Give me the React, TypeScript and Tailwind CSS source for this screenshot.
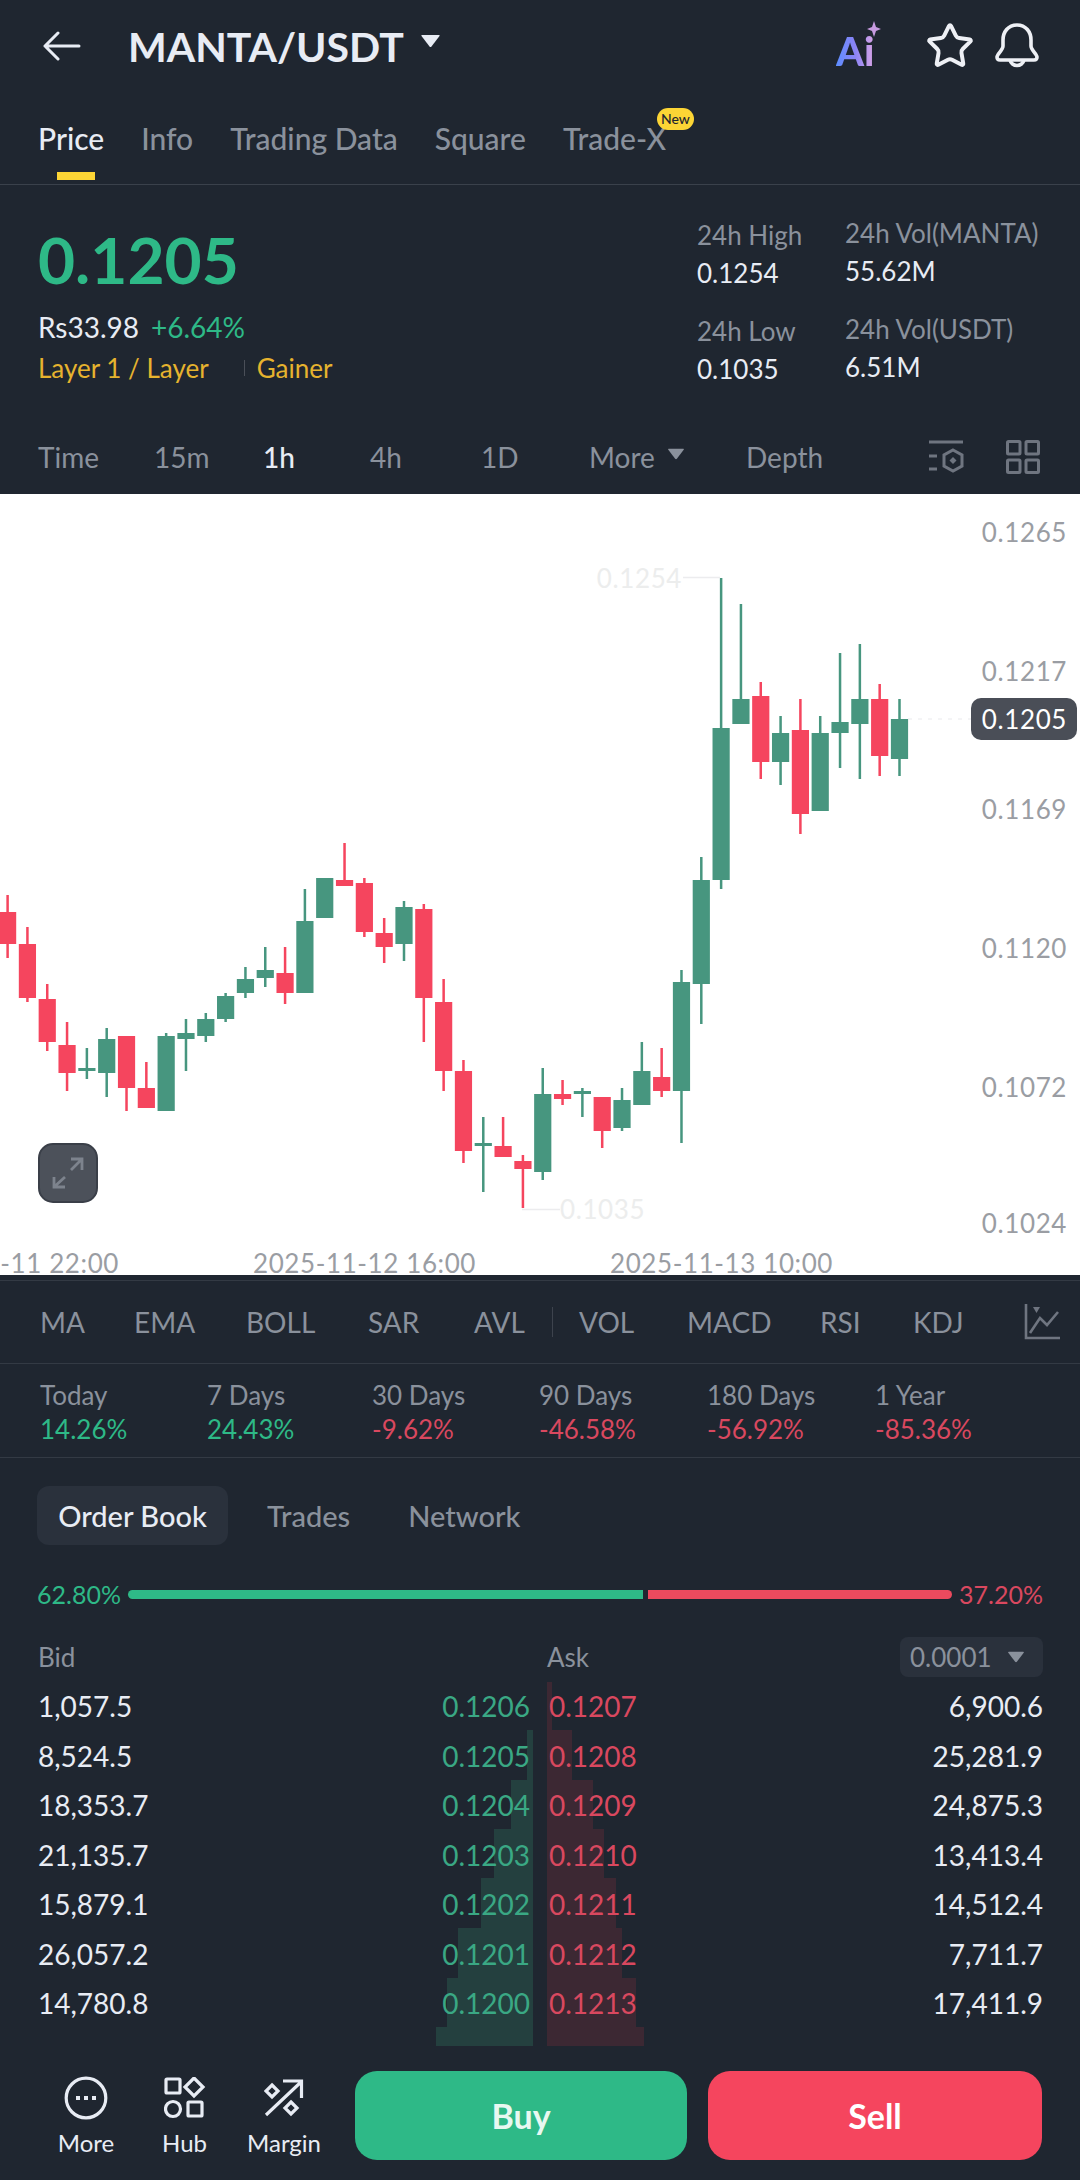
import React from "react";
import { Star } from "lucide-react";

type C = [number, number, number, number, number]; // up(1)/down(0), wickTop, wickBottom, bodyTop, bodyBottom
const candles: C[] = [
  [0, 895, 958, 912, 944],
  [0, 927, 1002, 944, 998],
  [0, 984, 1051, 999, 1042],
  [0, 1022, 1091, 1045, 1073],
  [1, 1048, 1079, 1068, 1071],
  [1, 1028, 1097, 1039, 1073],
  [0, 1036, 1111, 1036, 1088],
  [0, 1062, 1108, 1088, 1108],
  [1, 1033, 1111, 1036, 1111],
  [1, 1019, 1071, 1033, 1039],
  [1, 1013, 1042, 1019, 1036],
  [1, 993, 1022, 996, 1019],
  [1, 967, 998, 979, 993],
  [1, 947, 987, 970, 978],
  [0, 947, 1004, 973, 993],
  [1, 889, 993, 921, 993],
  [1, 878, 918, 878, 918],
  [0, 843, 886, 880, 886],
  [0, 878, 937, 883, 932],
  [0, 918, 963, 933, 947],
  [1, 901, 961, 907, 944],
  [0, 904, 1042, 909, 998],
  [0, 979, 1091, 1002, 1071],
  [0, 1060, 1163, 1071, 1151],
  [1, 1117, 1192, 1143, 1146],
  [0, 1117, 1157, 1146, 1157],
  [0, 1155, 1208, 1161, 1169],
  [1, 1068, 1180, 1094, 1172],
  [0, 1080, 1105, 1094, 1099],
  [1, 1088, 1117, 1091, 1094],
  [0, 1097, 1148, 1097, 1131],
  [1, 1088, 1131, 1100, 1128],
  [1, 1042, 1105, 1071, 1105],
  [0, 1048, 1097, 1077, 1091],
  [1, 970, 1143, 982, 1091],
  [1, 857, 1024, 880, 984],
  [1, 578, 889, 728, 880].map((v, i) => (i === 1 ? 578 : v)) as C,
  [1, 604, 724, 699, 724],
  [0, 682, 779, 696, 762],
  [1, 716, 785, 733, 762],
  [0, 699, 834, 730, 814],
  [1, 716, 811, 733, 811],
  [1, 653, 768, 722, 733],
  [1, 644, 779, 699, 724],
  [0, 684, 776, 699, 756],
  [1, 699, 776, 719, 759],
];

const CHART_TOP = 494;
const axis: [string, number][] = [
  ["0.1265", 532],
  ["0.1217", 671],
  ["0.1169", 809],
  ["0.1120", 948],
  ["0.1072", 1087],
  ["0.1024", 1223],
];

function Chart() {
  return (
    <div className="relative h-[781px] w-full overflow-hidden bg-white">
      <svg width="1080" height="781" viewBox={`0 ${CHART_TOP} 1080 781`} className="block">
        {candles.map((c, i) => {
          const x = 7.6 + 19.82 * i;
          const fill = c[0] ? "#47967f" : "#f5455e";
          return (
            <g key={i} fill={fill}>
              <rect x={x - 1.25} y={c[1]} width={2.5} height={c[2] - c[1]} />
              <rect x={x - 8.6} y={c[3]} width={17.2} height={Math.max(c[4] - c[3], 3)} />
            </g>
          );
        })}
        <line x1="683" y1="577.5" x2="720" y2="577.5" stroke="#ececee" strokeWidth="1.5" />
        <line x1="522" y1="1209.5" x2="560" y2="1209.5" stroke="#ececee" strokeWidth="1.5" />
        <line x1="908" y1="719" x2="971" y2="719" stroke="#e9e9ec" strokeWidth="1" strokeDasharray="4 6" />
        <g fontFamily="Lato, sans-serif" fontSize="26" letterSpacing="0.6">
          {axis.map(([t, y]) => (
            <text key={t} x="1067" y={y} textAnchor="end" dominantBaseline="central" fill="#9a9da3">
              {t}
            </text>
          ))}
          <text x="682" y="578" textAnchor="end" dominantBaseline="central" fill="#eceded">0.1254</text>
          <text x="560" y="1209" dominantBaseline="central" fill="#eceded">0.1035</text>
          <text x="119" y="1263" textAnchor="end" dominantBaseline="central" fill="#9a9da3">-11 22:00</text>
          <text x="253" y="1263" dominantBaseline="central" fill="#9a9da3">2025-11-12 16:00</text>
          <text x="610" y="1263" dominantBaseline="central" fill="#9a9da3">2025-11-13 10:00</text>
        </g>
      </svg>
      <div className="absolute left-[971px] top-[204px] flex h-[42px] w-[106px] items-center justify-end rounded-[10px] bg-[#4a4e57] pr-[10px] text-[26px] leading-none tracking-[0.6px] text-white">
        0.1205
      </div>
      <div className="absolute left-[38px] top-[649px] flex h-[60px] w-[60px] items-center justify-center rounded-[15px] border-2 border-[#3a3f48] bg-[#4c515a]">
        <svg width="40" height="40" viewBox="0 0 40 40" fill="none" stroke="#7d838d" strokeWidth="2.8">
          <path d="M6 34 L17 24 M6 24 V34 H17" />
          <path d="M23 17 L34 6 M23 6 H34 V17" />
        </svg>
      </div>
    </div>
  );
}

const DarkCaret = ({ className }: { className: string }) => (
  <svg viewBox="0 0 20 14" className={className} fill="currentColor">
    <path d="M1.5 1 H18.5 Q19.6 1 19 2 L11 12.6 Q10 13.6 9 12.6 L1 2 Q0.4 1 1.5 1 Z" />
  </svg>
);

function Header() {
  return (
    <div className="flex h-[92px] items-center pl-[43px] pr-[41px]">
      <svg width="38" height="30" viewBox="0 0 38 30" fill="none" stroke="#e8ecf4" strokeWidth="3" strokeLinecap="round" strokeLinejoin="round">
        <path d="M36 15 H2 M15 2 L2 15 L15 28" />
      </svg>
      <span className="ml-[47px] text-[41px] font-bold leading-none text-[#e8ecf4]">MANTA/USDT</span>
      <DarkCaret className="ml-[16px] mt-[-10px] h-[14px] w-[21px] text-[#e8ecf4]" />
      <div className="relative ml-auto mr-[43px] mt-[10px] h-[38px] w-[46px]">
        <span className="bg-gradient-to-r from-[#5a8dff] via-[#8a83f5] to-[#d9a3e6] bg-clip-text text-[40px] font-black leading-[38px] text-transparent">
          Ai
        </span>
        <svg className="absolute left-[31px] top-[-11px]" width="14" height="16" viewBox="0 0 14 16" fill="#c79be0">
          <path d="M7 0 L9 6 L14 8 L9 10 L7 16 L5 10 L0 8 L5 6 Z" />
        </svg>
      </div>
      <Star size={50} strokeWidth={1.9} color="#eef0f5" />
      <svg className="ml-[20px]" width="44" height="46" viewBox="0 0 44 46" fill="none" stroke="#eef0f5" strokeWidth="3.6" strokeLinejoin="round">
        <path d="M22 2 C13 2 8 9 8 17 V23 C8 27 2 31 2 34 Q2 37 5 37 H39 Q42 37 42 34 C42 31 36 27 36 23 V17 C36 9 31 2 22 2 Z" />
        <path d="M15 37 A7.2 7.2 0 0 0 29 37" />
      </svg>
    </div>
  );
}

function Tabs() {
  return (
    <div className="relative flex h-[93px] items-center gap-[37px] border-b border-[#3a414b] pb-[1px] pl-[38px] text-[30px] font-medium leading-none text-[#8a919c]">
      <span className="relative text-[#e8ecf4]">
        Price
        <span className="absolute left-[19px] top-[49px] h-[8px] w-[38px] bg-[#fcd535]" />
      </span>
      <span>Info</span>
      <span>Trading Data</span>
      <span>Square</span>
      <span className="relative">
        Trade-X
        <span className="absolute left-[94px] top-[-15px] flex h-[22px] w-[37px] items-center justify-center rounded-full bg-[#fcd535] text-[14px] font-medium text-[#1f2630]">
          New
        </span>
      </span>
    </div>
  );
}

function Stats() {
  return (
    <div className="flex h-[235px] pl-[38px]">
      <div className="flex w-[659px] flex-col pt-[43px]">
        <span className="text-[64px] font-bold leading-[64px] text-[#2eb987]">0.1205</span>
        <div className="mt-[19px] flex gap-[12px] text-[28px] leading-[32px]">
          <span className="text-[#e8ecf4]">Rs33.98</span>
          <span className="text-[#2eb987]">+6.64%</span>
        </div>
        <div className="mt-[9px] flex items-center text-[26px] leading-[32px] text-[#e6b32e]">
          <span>Layer 1 / Layer</span>
          <span className="ml-[35px] mr-[12px] h-[16px] w-px bg-[#4a4f58]" />
          <span>Gainer</span>
        </div>
      </div>
      <div className="flex w-[148px] flex-col pt-[35px] text-[26px] leading-[30px]">
        <span className="text-[#8a919c]">24h High</span>
        <span className="mt-[8px] text-[#e8ecf4]">0.1254</span>
        <span className="mt-[28px] text-[#8a919c]">24h Low</span>
        <span className="mt-[8px] text-[#e8ecf4]">0.1035</span>
      </div>
      <div className="flex flex-col pt-[33px] text-[26px] leading-[30px]">
        <span className="text-[#8a919c]">24h Vol(MANTA)</span>
        <span className="mt-[8px] text-[#e8ecf4]">55.62M</span>
        <span className="mt-[28px] text-[#8a919c]">24h Vol(USDT)</span>
        <span className="mt-[8px] text-[#e8ecf4]">6.51M</span>
      </div>
    </div>
  );
}

function Intervals() {
  return (
    <div className="flex h-[74px] items-center pb-[1px] pl-[38px] pr-[40px] text-[28px] leading-none text-[#8a919c]">
      <span className="w-[116px]">Time</span>
      <span className="w-[109px]">15m</span>
      <span className="w-[107px] font-medium text-[#e8ecf4]">1h</span>
      <span className="w-[111px]">4h</span>
      <span className="w-[108px]">1D</span>
      <span className="flex w-[157px] items-center">
        More
        <DarkCaret className="ml-[12px] mt-[-6px] h-[12px] w-[18px]" />
      </span>
      <span>Depth</span>
      <svg className="ml-auto" width="36" height="36" viewBox="0 0 36 36" fill="none" stroke="#6f7580" strokeWidth="3">
        <path d="M1 3 H35 M1 17 H9 M1 30 H9" />
        <path d="M25 11 L34 16 V27 L25 32 L16 27 V16 Z" />
        <path d="M25 18 L28.5 21.5 L25 25 L21.5 21.5 Z" fill="#6f7580" stroke="none" />
      </svg>
      <svg className="ml-[42px]" width="34" height="34" viewBox="0 0 34 34" fill="none" stroke="#6f7580" strokeWidth="3">
        <rect x="1.5" y="1.5" width="12.5" height="12.5" rx="1" />
        <rect x="20" y="1.5" width="12.5" height="12.5" rx="1" />
        <rect x="1.5" y="20" width="12.5" height="12.5" rx="1" />
        <rect x="20" y="20" width="12.5" height="12.5" rx="1" />
      </svg>
    </div>
  );
}

function Indicators() {
  return (
    <div className="flex h-[84px] items-center border-y border-y-[#333a44] pl-[40px] pr-[20px] text-[28px] leading-none text-[#8a919c]">
      <span className="w-[94px]">MA</span>
      <span className="w-[112px]">EMA</span>
      <span className="w-[122px]">BOLL</span>
      <span className="w-[106px]">SAR</span>
      <span className="w-[78px]">AVL</span>
      <span className="mr-[26px] h-[30px] w-px bg-[#3d434d]" />
      <span className="w-[108px]">VOL</span>
      <span className="w-[133px]">MACD</span>
      <span className="w-[93px]">RSI</span>
      <span>KDJ</span>
      <svg className="ml-auto" width="36" height="36" viewBox="0 0 36 36" fill="none" stroke="#6f7580" strokeWidth="2.6">
        <path d="M2 0 V34 H36" />
        <path d="M6 29 L16 14 L23 21 L34 8" />
        <path d="M9 3 H16 L12.5 9 Z" fill="#6f7580" stroke="none" />
      </svg>
    </div>
  );
}

const changes: [string, string, boolean, string][] = [
  ["Today", "14.26%", true, "w-[167px]"],
  ["7 Days", "24.43%", true, "w-[165px]"],
  ["30 Days", "-9.62%", false, "w-[167px]"],
  ["90 Days", "-46.58%", false, "w-[168px]"],
  ["180 Days", "-56.92%", false, "w-[168px]"],
  ["1 Year", "-85.36%", false, ""],
];

function Changes() {
  return (
    <div className="flex h-[94px] border-b border-[#333a44] pl-[40px] pt-[16px] text-[26px] leading-[30px]">
      {changes.map(([label, val, up, w]) => (
        <div key={label} className={`flex flex-col gap-[4px] ${w}`}>
          <span className="text-[#8a919c]">{label}</span>
          <span className={up ? "text-[#2eb987]" : "text-[#d9485f]"}>{val}</span>
        </div>
      ))}
    </div>
  );
}

function BookTabs() {
  return (
    <div className="ml-[37px] mt-[28px] flex h-[59px] items-center text-[29px] font-medium leading-none text-[#8a919c]">
      <span className="flex h-full w-[191px] items-center justify-center rounded-[12px] bg-[#2a313c] text-[#e8ecf4]">Order Book</span>
      <span className="ml-[39px]">Trades</span>
      <span className="ml-[58px]">Network</span>
    </div>
  );
}

function Ratio() {
  return (
    <div className="ml-[37px] mr-[37px] mt-[34px] flex h-[30px] items-center text-[25px] leading-none">
      <span className="w-[91px] text-[#2eb987]">62.80%</span>
      <span className="h-[9px] w-[515px] rounded-l-full bg-[#2eb987]" />
      <span className="ml-[5px] h-[9px] w-[304px] rounded-r-full bg-[#ec4a5e]" />
      <span className="ml-auto text-[#d9485f]">37.20%</span>
    </div>
  );
}

function BookHeader() {
  return (
    <div className="ml-[38px] mr-[37px] mt-[28px] flex h-[40px] items-center text-[26px] leading-none text-[#8a919c]">
      <span className="w-[509px]">Bid</span>
      <span>Ask</span>
      <span className="ml-auto flex h-full w-[143px] items-center rounded-[8px] bg-[#2a313c] pl-[10px]">
        0.0001
        <DarkCaret className="ml-[15px] h-[12px] w-[18px]" />
      </span>
    </div>
  );
}

const rows = [
  ["1,057.5", "0.1206", "0.1207", "6,900.6"],
  ["8,524.5", "0.1205", "0.1208", "25,281.9"],
  ["18,353.7", "0.1204", "0.1209", "24,875.3"],
  ["21,135.7", "0.1203", "0.1210", "13,413.4"],
  ["15,879.1", "0.1202", "0.1211", "14,512.4"],
  ["26,057.2", "0.1201", "0.1212", "7,711.7"],
  ["14,780.8", "0.1200", "0.1213", "17,411.9"],
];

const bidSteps = ["h-[50px] w-[6px]", "h-[49px] w-[22px]", "h-[49px] w-[39px]", "h-[50px] w-[52px]", "h-[50px] w-[75px]", "h-[49px] w-[86px]", "h-[19px] w-[97px]"];
const askSteps = ["h-[48px] w-[5px]", "h-[50px] w-[25px]", "h-[49px] w-[46px]", "h-[49px] w-[57px]", "h-[50px] w-[69px]", "h-[50px] w-[75px]", "h-[49px] w-[89px]", "h-[19px] w-[97px]"];

function Book() {
  return (
    <div className="relative mt-[5px] h-[364px] pl-[38px] pr-[37px] text-[28px] leading-[49.5px]">
      <div className="absolute left-[430px] top-[48px] flex w-[103px] flex-col items-end">
        {bidSteps.map((s) => (
          <div key={s} className={`${s} bg-[#24403f]`} />
        ))}
      </div>
      <div className="absolute left-[547px] top-0 flex w-[103px] flex-col items-start">
        {askSteps.map((s) => (
          <div key={s} className={`${s} bg-[#3c2833]`} />
        ))}
      </div>
      <div className="relative flex flex-col">
        {rows.map((r) => (
          <div key={r[0]} className="flex h-[49.5px]">
            <span className="text-[#e8ecf4]">{r[0]}</span>
            <span className="ml-auto w-[100px] text-right text-[#3aa884]">{r[1]}</span>
            <span className="ml-[19px] w-[100px] text-[#d9485f]">{r[2]}</span>
            <span className="w-[394px] text-right text-[#e8ecf4]">{r[3]}</span>
          </div>
        ))}
      </div>
    </div>
  );
}

function Action({ label, className, children }: { label: string; className: string; children: React.ReactNode }) {
  return (
    <div className={`flex flex-col items-center ${className}`}>
      <div className="flex h-[42px] items-center">{children}</div>
      <span className="mt-[10px] text-[24px] leading-[28px] text-[#e8ecf4]">{label}</span>
    </div>
  );
}

function Footer() {
  return (
    <div className="mt-[25px] flex h-[89px] items-start pl-[59px] pr-[38px]">
      <div className="mt-[6px] flex">
        <Action label="More" className="w-[54px]">
          <svg width="44" height="44" viewBox="0 0 44 44" fill="none" stroke="#e8ecf4" strokeWidth="3.2">
            <circle cx="22" cy="22" r="19.8" />
            <path d="M12 20 h4 v4 h-4 Z M20 20 h4 v4 h-4 Z M28 20 h4 v4 h-4 Z" fill="#e8ecf4" stroke="none" />
          </svg>
        </Action>
        <Action label="Hub" className="ml-[49px] w-[45px]">
          <svg width="42" height="42" viewBox="0 0 42 42" fill="none" stroke="#e8ecf4" strokeWidth="3.2">
            <rect x="2" y="2" width="14" height="14" rx="1" />
            <path d="M30 1 L39 10 L30 19 L21 10 Z" />
            <circle cx="9" cy="32" r="7.5" />
            <rect x="24" y="25" width="14" height="14" rx="1" />
          </svg>
        </Action>
        <Action label="Margin" className="ml-[41px] w-[72px]">
          <svg width="40" height="38" viewBox="0 0 40 38" fill="none" stroke="#e8ecf4" strokeWidth="3.2">
            <path d="M2 36 L37 3 M19 2 H37.5 V19" />
            <path d="M8 6 L14 12 L8 18 L2 12 Z" />
            <path d="M27 23 L33 29 L27 35 L21 29 Z" />
          </svg>
        </Action>
      </div>
      <button className="ml-[35px] h-[89px] w-[332px] rounded-[22px] bg-[#2eb987] text-[34px] font-bold text-[#e8f8f1]">Buy</button>
      <button className="ml-[21px] h-[89px] w-[334px] rounded-[22px] bg-[#f5455e] text-[34px] font-bold text-white">Sell</button>
    </div>
  );
}

export default function App() {
  return (
    <div className="flex h-[2180px] w-[1080px] flex-col overflow-hidden bg-[#1f2630] [font-family:Lato,sans-serif]">
      <Header />
      <Tabs />
      <Stats />
      <Intervals />
      <Chart />
      <div className="h-[5px]" />
      <Indicators />
      <Changes />
      <BookTabs />
      <Ratio />
      <BookHeader />
      <Book />
      <Footer />
    </div>
  );
}
